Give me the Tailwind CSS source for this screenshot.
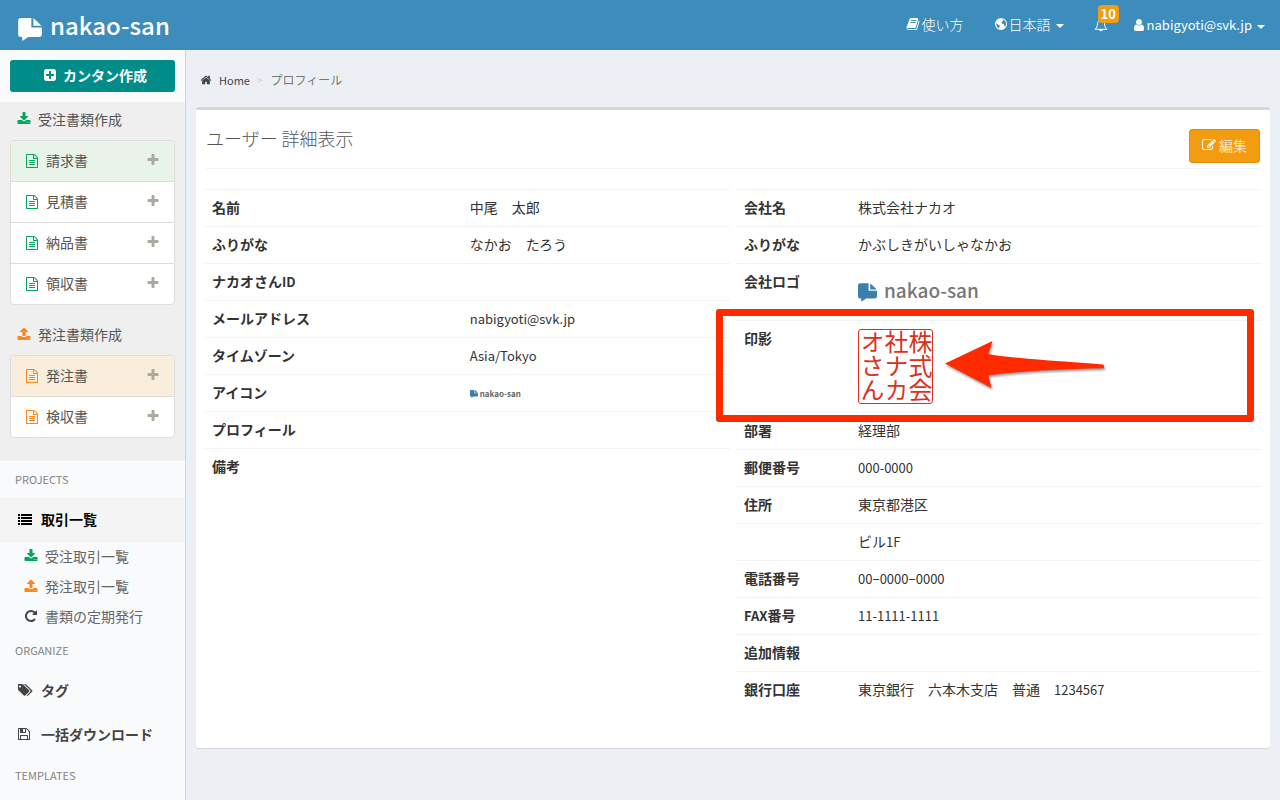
<!DOCTYPE html>
<html lang="ja">
<head>
  <meta charset="UTF-8">
  <meta name="viewport" content="width=device-width, initial-scale=1.0">
  <title>プロフィール - nakao-san</title>
  <script src="https://cdn.jsdelivr.net/npm/@tailwindcss/browser@4"></script>
</head>
<body class="bg-[#ecf0f5] text-[#333] text-sm leading-5 font-['Noto_Sans_CJK_JP',sans-serif]">

  <!-- icons -->
  <svg class="hidden" aria-hidden="true">
    <symbol id="logo" viewBox="0 0 70 68"><path d="M8 0H39V28H70V48Q70 56 62 56H30L12 68V56H8Q0 56 0 48V8Q0 0 8 0ZM45 0L69 23H45Z"/></symbol>
    <symbol id="home" viewBox="0 0 1792 1792"><path d="M1472 992v480q0 26-19 45t-45 19h-384v-384h-256v384h-384q-26 0-45-19t-19-45v-480q0-1 .5-3t.5-3l575-474 575 474q1 2 1 6zm223-69l-62 74q-8 9-21 11h-3q-13 0-21-7l-692-577-692 577q-12 8-24 7-13-2-21-11l-62-74q-8-10-7-23.5t11-21.5l719-599q32-26 76-26t76 26l244 204v-195q0-14 9-23t23-9h192q14 0 23 9t9 23v408l219 182q10 8 11 21.5t-7 23.5z"/></symbol>
    <symbol id="plus" viewBox="0 0 1792 1792"><path d="M1600 736v192q0 40-28 68t-68 28h-416v416q0 40-28 68t-68 28h-192q-40 0-68-28t-28-68v-416h-416q-40 0-68-28t-28-68v-192q0-40 28-68t68-28h416v-416q0-40 28-68t68-28h192q40 0 68 28t28 68v416h416q40 0 68 28t28 68z"/></symbol>
    <symbol id="plus-square" viewBox="0 0 1792 1792"><path d="M1408 960v-128q0-26-19-45t-45-19h-320v-320q0-26-19-45t-45-19h-128q-26 0-45 19t-19 45v320h-320q-26 0-45 19t-19 45v128q0 26 19 45t45 19h320v320q0 26 19 45t45 19h128q26 0 45-19t19-45v-320h320q26 0 45-19t19-45zm256-544v960q0 119-84.5 203.5t-203.5 84.5h-960q-119 0-203.5-84.5t-84.5-203.5v-960q0-119 84.5-203.5t203.5-84.5h960q119 0 203.5 84.5t84.5 203.5z"/></symbol>
    <symbol id="download" viewBox="0 0 1792 1792"><path d="M1344 1344q0-26-19-45t-45-19-45 19-19 45 19 45 45 19 45-19 19-45zm256 0q0-26-19-45t-45-19-45 19-19 45 19 45 45 19 45-19 19-45zm128-224v320q0 40-28 68t-68 28h-1472q-40 0-68-28t-28-68v-320q0-40 28-68t68-28h465l135 136q58 56 136 56t136-56l136-136h464q40 0 68 28t28 68zm-325-569q17 41-14 70l-448 448q-18 19-45 19t-45-19l-448-448q-31-29-14-70 17-39 59-39h256v-448q0-26 19-45t45-19h256q26 0 45 19t19 45v448h256q42 0 59 39z"/></symbol>
    <symbol id="upload" viewBox="0 0 1792 1792"><path d="M1344 1472q0-26-19-45t-45-19-45 19-19 45 19 45 45 19 45-19 19-45zm256 0q0-26-19-45t-45-19-45 19-19 45 19 45 45 19 45-19 19-45zm128-224v320q0 40-28 68t-68 28h-1472q-40 0-68-28t-28-68v-320q0-40 28-68t68-28h427q21 56 70.5 92t110.5 36h256q61 0 110.5-36t70.5-92h427q40 0 68 28t28 68zm-325-648q-17 40-59 40h-256v448q0 26-19 45t-45 19h-256q-26 0-45-19t-19-45v-448h-256q-42 0-59-40-17-39 14-69l448-448q18-19 45-19t45 19l448 448q31 30 14 69z"/></symbol>
    <symbol id="file" viewBox="0 0 1792 1792"><path d="M1596 380q28 28 48 76t20 88v1152q0 40-28 68t-68 28h-1344q-40 0-68-28t-28-68v-1600q0-40 28-68t68-28h896q40 0 88 20t76 48zm-444-244v376h376q-10-29-22-41l-313-313q-12-12-41-22zm384 1528v-1024h-416q-40 0-68-28t-28-68v-416h-768v1536h1280zm-1024-864q0-14 9-23t23-9h704q14 0 23 9t9 23v64q0 14-9 23t-23 9h-704q-14 0-23-9t-9-23v-64zm736 224q14 0 23 9t9 23v64q0 14-9 23t-23 9h-704q-14 0-23-9t-9-23v-64q0-14 9-23t23-9h704zm0 256q14 0 23 9t9 23v64q0 14-9 23t-23 9h-704q-14 0-23-9t-9-23v-64q0-14 9-23t23-9h704z"/></symbol>
    <symbol id="list" viewBox="0 0 14 14"><path d="M0 2h2v2H0zM3 2h11v2H3zM0 5h2v2H0zM3 5h11v2H3zM0 8h2v2H0zM3 8h11v2H3zM0 11h2v2H0zM3 11h11v2H3z"/></symbol>
    <symbol id="repeat" viewBox="0 0 1792 1792"><path d="M1664 256v448q0 26-19 45t-45 19h-448q-42 0-59-40-17-39 14-69l138-138q-148-137-349-137-104 0-198.5 40.5t-163.5 109.5-109.5 163.5-40.5 198.5 40.5 198.5 109.5 163.5 163.5 109.5 198.5 40.5q119 0 225-52t179-147q7-10 23-12 15 0 25 9l137 138q9 8 9.5 20.5t-7.5 22.5q-109 132-264 204.5t-327 72.5q-156 0-298-61t-245-164-164-245-61-298 61-298 164-245 245-164 298-61q147 0 284.5 55.5t244.5 156.5l130-129q29-31 70-14 39 17 39 59z"/></symbol>
    <symbol id="tags" viewBox="0 0 1920 1792"><path d="M384 448q0-53-37.5-90.5t-90.5-37.5-90.5 37.5-37.5 90.5 37.5 90.5 90.5 37.5 90.5-37.5 37.5-90.5zm1067 576q0 53-37 90l-491 492q-39 37-91 37-53 0-90-37l-715-716q-38-37-64.5-101t-26.5-117v-416q0-52 38-90t90-38h416q53 0 117 26.5t102 64.5l715 714q37 39 37 91zm384 0q0 53-37 90l-491 492q-39 37-91 37-36 0-59-14t-53-45l470-470q37-37 37-90 0-52-37-91l-715-714q-38-38-102-64.5t-117-26.5h224q53 0 117 26.5t102 64.5l715 714q37 39 37 91z"/></symbol>
    <symbol id="floppy" viewBox="0 0 1792 1792"><path d="M512 1536h768v-384h-768v384zm896 0h128v-896q0-14-10-38.5t-20-34.5l-281-281q-10-10-34-20t-39-10v416q0 40-28 68t-68 28h-576q-40 0-68-28t-28-68v-416h-128v1280h128v-416q0-40 28-68t68-28h832q40 0 68 28t28 68v416zm-384-928v-320q0-13-9.5-22.5t-22.5-9.5h-192q-13 0-22.5 9.5t-9.5 22.5v320q0 13 9.5 22.5t22.5 9.5h192q13 0 22.5-9.5t9.5-22.5zm640 32v928q0 40-28 68t-68 28h-1344q-40 0-68-28t-28-68v-1344q0-40 28-68t68-28h928q40 0 88 20t76 48l280 280q28 28 48 76t20 88z"/></symbol>
    <symbol id="user" viewBox="256 0 1280 1792"><path d="M1536 1399q0 109-62.5 187t-150.5 78h-854q-88 0-150.5-78t-62.5-187q0-85 8.5-160.5t31.5-152 58.5-131 94-89 134.5-34.5q131 128 313 128t313-128q76 0 134.5 34.5t94 89 58.5 131 31.5 152 8.5 160.5zm-256-887q0 159-112.5 271.5t-271.5 112.5-271.5-112.5-112.5-271.5 112.5-271.5 271.5-112.5 271.5 112.5 112.5 271.5z"/></symbol>
    <symbol id="book" viewBox="0 0 1792 1792"><path d="M1703 478q40 57 18 129l-275 906q-19 64-76.5 107.5t-122.5 43.5h-923q-77 0-148.5-53.5t-99.5-131.5q-24-67-2-127 0-4 3-27t4-37q1-8-3-21.5t-3-19.5q2-11 8-21t16.5-23.5 16.5-23.5q23-38 45-91.5t30-91.5q3-10 .5-30t-.5-28q3-11 17-28t17-23q21-36 42-92t25-90q1-9-2.5-32t.5-28q4-13 22-30.5t22-22.5q19-26 42.5-84.5t27.5-96.5q1-8-3-25.5t-2-26.5q2-8 9-18t18-23 17-21q8-12 16.5-30.5t15-35 16-36 19.5-32 26.5-23.5 36-11.5 47.5 5.5l-1 3q38-9 51-9h761q74 0 114 56t18 130l-274 906q-36 119-71.5 153.5t-128.5 34.5h-869q-27 0-38 15-11 16-1 43 24 70 144 70h923q29 0 56-15.5t35-41.5l300-987q7-22 5-57 38 15 59 43zm-1064 2q-4 13 2 22.5t20 9.5h608q13 0 25.5-9.5t16.5-22.5l21-64q4-13-2-22.5t-20-9.5h-608q-13 0-25.5 9.5t-16.5 22.5zm-83 256q-4 13 2 22.5t20 9.5h608q13 0 25.5-9.5t16.5-22.5l21-64q4-13-2-22.5t-20-9.5h-608q-13 0-25.5 9.5t-16.5 22.5z"/></symbol>
    <symbol id="globe" viewBox="0 0 14 14"><path fill-rule="evenodd" d="M7 1a6 6 0 1 0 0 12A6 6 0 0 0 7 1ZM8.500 2.300L10 2.900 11.300 4.300 12 6 11.900 8 11 9.800 10.200 8.500 9.800 7 8.300 6.800 7.300 5.700 8 4.500 9.200 4.200ZM2.300 6L3.600 7.300 5.200 8 5.900 9 5.200 10.200 4.900 11.400 3.300 10.200 2.400 8.600Z"/></symbol>
    <symbol id="bell" viewBox="0 0 14 14"><path fill="none" stroke="currentColor" stroke-linejoin="round" d="M7 1.500V2.300M7 2.300C4.800 2.300 3.500 4 3.500 5.800C3.500 8.500 2.500 10 1 11.300H13C11.500 10 10.500 8.500 10.500 5.800C10.500 4 9.200 2.300 7 2.300Z"/><path d="M5.200 11.500H8.800A1.800 1.800 0 0 1 5.200 11.500Z"/></symbol>
    <symbol id="edit" viewBox="0 0 1792 1792"><path d="M888 1184l116-116-152-152-116 116v56h96v96h56zm440-720q-16-16-33 1l-350 350q-17 17-1 33t33-1l350-350q17-17 1-33zm80 594v190q0 119-84.5 203.5t-203.5 84.5h-832q-119 0-203.5-84.5t-84.5-203.5v-832q0-119 84.5-203.5t203.5-84.5h832q63 0 117 25 15 7 18 23 3 17-9 29l-49 49q-14 14-32 8-23-6-45-6h-832q-66 0-113 47t-47 113v832q0 66 47 113t113 47h832q66 0 113-47t47-113v-126q0-13 9-22l64-64q15-15 35-7t20 29zm-96-738l288 288-672 672h-288v-288zm444 132l-92 92-288-288 92-92q28-28 68-28t68 28l152 152q28 28 28 68t-28 68z"/></symbol>
    <symbol id="caret" viewBox="0 0 8 4"><path d="M0 0H8L4 4Z"/></symbol>
  </svg>

  <header class="flex h-[50px] items-center justify-between bg-[#3c8dbc] pl-[18px] pr-[15px] text-white">
    <a href="#" class="flex items-center gap-2 text-2xl font-medium">
      <svg class="mt-2 h-[23px] w-6 fill-current"><use href="#logo"/></svg>
      nakao-san
    </a>
    <nav class="flex items-center gap-[30px]">
      <a href="#" class="flex items-center gap-0.5 pb-0.5 font-light"><svg class="size-3.5 fill-current"><use href="#book"/></svg>使い方</a>
      <a href="#" class="flex items-center pb-0.5 font-light"><svg class="mr-px size-3.5 fill-current"><use href="#globe"/></svg>日本語<svg class="ml-[5px] mt-1 h-1 w-2 fill-current"><use href="#caret"/></svg></a>
      <a href="#" aria-label="お知らせ" class="relative -mr-1">
        <svg class="size-3.5 fill-current"><use href="#bell"/></svg>
        <span class="absolute -top-[13px] left-1 rounded bg-[#f39c12] px-[3px] text-[13px] leading-[18px] font-bold">10</span>
      </a>
      <a href="#" class="flex items-center text-[13px]"><svg class="mr-[3px] h-3.5 w-2.5 fill-current"><use href="#user"/></svg>nabigyoti@svk.jp<svg class="ml-[5px] mt-1 h-1 w-2 fill-current"><use href="#caret"/></svg></a>
    </nav>
  </header>

  <div class="flex min-h-[calc(100vh-50px)]">
    <aside class="w-[186px] shrink-0 border-r border-[#d2d6de] bg-[#f9fafc] text-[#444]">
      <div class="p-2.5">
        <button type="button" class="flex h-8 w-full items-center justify-center gap-1.5 rounded-[3px] bg-[#008d89] pb-0.5 pl-[5px] font-bold text-white">
          <svg class="size-3.5 fill-current"><use href="#plus-square"/></svg>カンタン作成
        </button>
      </div>

      <section class="bg-[#efefef] px-2.5 pb-[23px] text-[#555]">
        <h2 class="flex h-[38px] items-center gap-[7px] pb-1 pl-[7px]"><svg class="size-3.5 fill-[#00a65a]"><use href="#download"/></svg>受注書類作成</h2>
        <ul class="divide-y divide-[#ddd] overflow-hidden rounded border border-[#ddd] bg-white">
          <li><a href="#" class="flex h-10 items-center bg-[#e8f3e9] px-3.5 pb-0.5"><svg class="mt-0.5 mr-[7px] size-3.5 fill-[#00a65a]"><use href="#file"/></svg>請求書<svg class="ml-auto size-3.5 fill-[#aaaaa0]"><use href="#plus"/></svg></a></li>
          <li><a href="#" class="flex h-10 items-center px-3.5 pb-0.5"><svg class="mt-0.5 mr-[7px] size-3.5 fill-[#00a65a]"><use href="#file"/></svg>見積書<svg class="ml-auto size-3.5 fill-[#aaaaa0]"><use href="#plus"/></svg></a></li>
          <li><a href="#" class="flex h-10 items-center px-3.5 pb-0.5"><svg class="mt-0.5 mr-[7px] size-3.5 fill-[#00a65a]"><use href="#file"/></svg>納品書<svg class="ml-auto size-3.5 fill-[#aaaaa0]"><use href="#plus"/></svg></a></li>
          <li><a href="#" class="flex h-10 items-center px-3.5 pb-0.5"><svg class="mt-0.5 mr-[7px] size-3.5 fill-[#00a65a]"><use href="#file"/></svg>領収書<svg class="ml-auto size-3.5 fill-[#aaaaa0]"><use href="#plus"/></svg></a></li>
        </ul>
        <h2 class="mt-3 flex h-[38px] items-center gap-[7px] pb-1 pl-[7px]"><svg class="size-3.5 fill-[#ff851b]"><use href="#upload"/></svg>発注書類作成</h2>
        <ul class="divide-y divide-[#ddd] overflow-hidden rounded border border-[#ddd] bg-white">
          <li><a href="#" class="flex h-10 items-center bg-[#f8eedb] px-3.5 pb-0.5"><svg class="mt-0.5 mr-[7px] size-3.5 fill-[#ff851b]"><use href="#file"/></svg>発注書<svg class="ml-auto size-3.5 fill-[#aaaaa0]"><use href="#plus"/></svg></a></li>
          <li><a href="#" class="flex h-10 items-center px-3.5 pb-0.5"><svg class="mt-0.5 mr-[7px] size-3.5 fill-[#ff851b]"><use href="#file"/></svg>検収書<svg class="ml-auto size-3.5 fill-[#aaaaa0]"><use href="#plus"/></svg></a></li>
        </ul>
      </section>

      <nav>
        <h3 class="flex h-[37px] items-center pb-0.5 pl-[15px] text-[11px] text-[#848484]">PROJECTS</h3>
        <a href="#" class="flex h-11 items-center gap-[9px] bg-[#f4f4f5] pb-0.5 pl-[18px] font-bold text-black"><svg class="size-3.5 fill-current"><use href="#list"/></svg>取引一覧</a>
        <ul class="text-[#666]">
          <li><a href="#" class="flex h-[30px] items-center gap-[7px] pb-0.5 pl-6"><svg class="size-3.5 fill-[#00a65a]"><use href="#download"/></svg>受注取引一覧</a></li>
          <li><a href="#" class="flex h-[30px] items-center gap-[7px] pb-0.5 pl-6"><svg class="size-3.5 fill-[#ff851b]"><use href="#upload"/></svg>発注取引一覧</a></li>
          <li><a href="#" class="flex h-[30px] items-center gap-[7px] pb-0.5 pl-6"><svg class="size-3.5 fill-[#444]"><use href="#repeat"/></svg>書類の定期発行</a></li>
        </ul>
        <h3 class="flex h-[37px] items-center pb-0.5 pl-[15px] text-[11px] text-[#848484]">ORGANIZE</h3>
        <a href="#" class="flex h-11 items-center gap-2 pb-0.5 pl-[18px] font-bold"><svg class="h-3.5 w-[15px] fill-current"><use href="#tags"/></svg>タグ</a>
        <a href="#" class="flex h-11 items-center gap-2.5 pb-0.5 pl-[17px] font-bold"><svg class="size-3.5 fill-current"><use href="#floppy"/></svg>一括ダウンロード</a>
        <h3 class="flex h-[37px] items-center pb-0.5 pl-[15px] text-[11px] text-[#848484]">TEMPLATES</h3>
      </nav>
    </aside>

    <main class="min-w-0 flex-1 px-2.5 pt-5">
      <nav aria-label="breadcrumb" class="flex items-center pl-1 text-xs leading-5">
        <a href="#" class="flex items-center gap-[7px] text-[11px] text-[#444]"><svg class="size-3 fill-current"><use href="#home"/></svg>Home</a>
        <span class="pr-2 pl-[7px] text-[10px] text-[#ccc]">&gt;</span>
        <span class="text-[#777]">プロフィール</span>
      </nav>

      <section class="mt-[17px] rounded-[3px] border-t-3 border-[#d2d6de] bg-white px-2.5 pb-10 shadow-[0_1px_1px_rgba(0,0,0,0.1)]">
        <div class="flex items-start justify-between border-b border-[#f4f4f4] pt-[19px] pb-[5px]">
          <h1 class="text-lg leading-[18px] font-light text-[#555]">ユーザー 詳細表示</h1>
          <button type="button" class="flex h-[34px] items-center gap-[3px] rounded-[3px] border border-[#e08e0b] bg-[#f39c12] px-3 pb-0.5 font-light text-white"><svg class="size-3.5 fill-current"><use href="#edit"/></svg>編集</button>
        </div>

        <div class="-mx-0.5 mt-5 grid grid-cols-2 items-start gap-1.5">
          <table class="w-full table-fixed text-left">
            <tbody class="[&_tr]:border-t [&_tr]:border-[#f4f4f4] [&_th]:px-2 [&_th]:pt-[7px] [&_th]:pb-[9px] [&_td]:px-2 [&_td]:pt-[7px] [&_td]:pb-[9px] [&_tr]:align-top">
              <tr><th scope="row" class="w-[49%]">名前</th><td>中尾　太郎</td></tr>
              <tr><th scope="row">ふりがな</th><td>なかお　たろう</td></tr>
              <tr><th scope="row">ナカオさん<span class="text-[13px] leading-none">ID</span></th><td></td></tr>
              <tr><th scope="row">メールアドレス</th><td class="py-2! text-[13px]">nabigyoti@svk.jp</td></tr>
              <tr><th scope="row">タイムゾーン</th><td class="py-2! text-[13px]">Asia/Tokyo</td></tr>
              <tr>
                <th scope="row">アイコン</th>
                <td class="py-2!"><div class="flex h-5 items-center gap-0.5 pt-0.5 text-[8px] font-bold text-[#666]"><svg class="size-2 fill-[#3c7fae]"><use href="#logo"/></svg>nakao-san</div></td>
              </tr>
              <tr><th scope="row">プロフィール</th><td></td></tr>
              <tr><th scope="row">備考</th><td></td></tr>
            </tbody>
          </table>

          <div class="relative">
            <table class="w-full table-fixed text-left">
              <tbody class="[&_tr]:border-t [&_tr]:border-[#f4f4f4] [&_th]:px-2 [&_th]:pt-[7px] [&_th]:pb-[9px] [&_td]:px-2 [&_td]:pt-[7px] [&_td]:pb-[9px] [&_tr]:align-top">
                <tr><th scope="row" class="w-[114px]">会社名</th><td>株式会社ナカオ</td></tr>
                <tr><th scope="row">ふりがな</th><td>かぶしきがいしゃなかお</td></tr>
                <tr>
                  <th scope="row">会社ロゴ</th>
                  <td><div class="flex h-10 items-center gap-[7px] pb-0.5 text-[19px] font-medium text-[#777]"><svg class="mt-1 size-[19px] fill-[#3c7fae]"><use href="#logo"/></svg>nakao-san</div></td>
                </tr>
                <tr>
                  <th scope="row">印影</th>
                  <td class="py-2!"><div class="size-[75px] rounded-[3px] border border-[#d8321e] text-2xl leading-6 text-[#d8321e] [writing-mode:vertical-rl]">株式会<br>社ナカ<br>オさん</div></td>
                </tr>
                <tr><th scope="row">部署</th><td>経理部</td></tr>
                <tr><th scope="row">郵便番号</th><td class="py-2! text-[13px]">000-0000</td></tr>
                <tr><th scope="row">住所</th><td>東京都港区</td></tr>
                <tr><th scope="row"></th><td>ビル<span class="text-[13px] leading-none">1F</span></td></tr>
                <tr><th scope="row">電話番号</th><td class="py-2! text-[13px]">00−0000−0000</td></tr>
                <tr><th scope="row"><span class="text-[13px] leading-none">FAX</span>番号</th><td class="py-2! text-[13px]">11-1111-1111</td></tr>
                <tr><th scope="row">追加情報</th><td></td></tr>
                <tr><th scope="row">銀行口座</th><td>東京銀行　六本木支店　普通　<span class="text-[13px] leading-none">1234567</span></td></tr>
              </tbody>
            </table>

            <!-- highlight over the seal row -->
            <div class="pointer-events-none absolute top-[120px] right-2 -left-5 h-[113px] rounded-[3px] border-7 border-[#ff2a00]"></div>
            <svg class="pointer-events-none absolute top-[151px] left-[209px] h-[50px] w-40 fill-[#ff2a00] drop-shadow-[1px_2px_1px_rgba(0,0,0,0.4)]" viewBox="0 0 160 50"><path d="M0 23.500L47.500 1 43.300 14Q62 18 158 24.500Q160 26 158.500 28.300Q80 30 43.300 35.300L46.500 48Z"/></svg>
          </div>
        </div>
      </section>
    </main>
  </div>
</body>
</html>
